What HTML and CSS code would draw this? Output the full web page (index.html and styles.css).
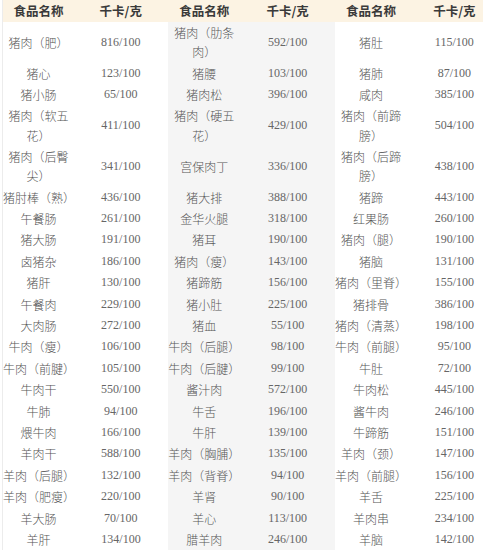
FILE: index.html
```html
<!DOCTYPE html>
<html lang="zh">
<head>
<meta charset="utf-8">
<title>食品热量表</title>
<link rel="stylesheet" href="styles.css">
</head>
<body>
<table class="cal">
  <colgroup>
    <col class="c-name1"><col class="c-kcal"><col class="c-name"><col class="c-kcal"><col class="c-name"><col class="c-kcal">
  </colgroup>
  <thead>
    <tr><th>食品名称</th><th>千卡/克</th><th class="alt">食品名称</th><th class="alt">千卡/克</th><th>食品名称</th><th>千卡/克</th></tr>
  </thead>
  <tbody>
    <tr class="dbl"><td>猪肉（肥）</td><td class="n">816/100</td><td class="alt">猪肉（肋条肉）</td><td class="alt n">592/100</td><td>猪肚</td><td class="n">115/100</td></tr>
    <tr><td>猪心</td><td class="n">123/100</td><td class="alt">猪腰</td><td class="alt n">103/100</td><td>猪肺</td><td class="n">87/100</td></tr>
    <tr><td>猪小肠</td><td class="n">65/100</td><td class="alt">猪肉松</td><td class="alt n">396/100</td><td>咸肉</td><td class="n">385/100</td></tr>
    <tr class="dbl"><td>猪肉（软五花）</td><td class="n">411/100</td><td class="alt">猪肉（硬五花）</td><td class="alt n">429/100</td><td>猪肉（前蹄膀）</td><td class="n">504/100</td></tr>
    <tr class="dbl"><td>猪肉（后臀尖）</td><td class="n">341/100</td><td class="alt">宫保肉丁</td><td class="alt n">336/100</td><td>猪肉（后蹄膀）</td><td class="n">438/100</td></tr>
    <tr><td>猪肘棒（熟）</td><td class="n">436/100</td><td class="alt">猪大排</td><td class="alt n">388/100</td><td>猪蹄</td><td class="n">443/100</td></tr>
    <tr><td>午餐肠</td><td class="n">261/100</td><td class="alt">金华火腿</td><td class="alt n">318/100</td><td>红果肠</td><td class="n">260/100</td></tr>
    <tr><td>猪大肠</td><td class="n">191/100</td><td class="alt">猪耳</td><td class="alt n">190/100</td><td>猪肉（腿）</td><td class="n">190/100</td></tr>
    <tr><td>卤猪杂</td><td class="n">186/100</td><td class="alt">猪肉（瘦）</td><td class="alt n">143/100</td><td>猪脑</td><td class="n">131/100</td></tr>
    <tr><td>猪肝</td><td class="n">130/100</td><td class="alt">猪蹄筋</td><td class="alt n">156/100</td><td>猪肉（里脊）</td><td class="n">155/100</td></tr>
    <tr><td>午餐肉</td><td class="n">229/100</td><td class="alt">猪小肚</td><td class="alt n">225/100</td><td>猪排骨</td><td class="n">386/100</td></tr>
    <tr><td>大肉肠</td><td class="n">272/100</td><td class="alt">猪血</td><td class="alt n">55/100</td><td>猪肉（清蒸）</td><td class="n">198/100</td></tr>
    <tr><td>牛肉（瘦）</td><td class="n">106/100</td><td class="alt">牛肉（后腿）</td><td class="alt n">98/100</td><td>牛肉（前腿）</td><td class="n">95/100</td></tr>
    <tr><td>牛肉（前腱）</td><td class="n">105/100</td><td class="alt">牛肉（后腱）</td><td class="alt n">99/100</td><td>牛肚</td><td class="n">72/100</td></tr>
    <tr><td>牛肉干</td><td class="n">550/100</td><td class="alt">酱汁肉</td><td class="alt n">572/100</td><td>牛肉松</td><td class="n">445/100</td></tr>
    <tr><td>牛肺</td><td class="n">94/100</td><td class="alt">牛舌</td><td class="alt n">196/100</td><td>酱牛肉</td><td class="n">246/100</td></tr>
    <tr><td>煨牛肉</td><td class="n">166/100</td><td class="alt">牛肝</td><td class="alt n">139/100</td><td>牛蹄筋</td><td class="n">151/100</td></tr>
    <tr><td>羊肉干</td><td class="n">588/100</td><td class="alt">羊肉（胸脯）</td><td class="alt n">135/100</td><td>羊肉（颈）</td><td class="n">147/100</td></tr>
    <tr><td>羊肉（后腿）</td><td class="n">132/100</td><td class="alt">羊肉（背脊）</td><td class="alt n">94/100</td><td>羊肉（前腿）</td><td class="n">156/100</td></tr>
    <tr><td>羊肉（肥瘦）</td><td class="n">220/100</td><td class="alt">羊肾</td><td class="alt n">90/100</td><td>羊舌</td><td class="n">225/100</td></tr>
    <tr><td>羊大肠</td><td class="n">70/100</td><td class="alt">羊心</td><td class="alt n">113/100</td><td>羊肉串</td><td class="n">234/100</td></tr>
    <tr><td>羊肝</td><td class="n">134/100</td><td class="alt">腊羊肉</td><td class="alt n">246/100</td><td>羊脑</td><td class="n">142/100</td></tr>
  </tbody>
</table>
</body>
</html>
```

FILE: styles.css
```css
html, body {
  margin: 0;
  padding: 0;
  background: #fff;
  overflow: hidden;
}

.cal {
  border-collapse: collapse;
  table-layout: fixed;
  width: 500px;
  margin-left: 2px;
  border-left: 1px solid #ececec;
  font-family: "Noto Sans CJK SC", "Noto Sans", sans-serif;
  font-size: 12px;
  color: #555;
}

.c-name1 { width: 71px; }
.c-name { width: 72px; }
.c-kcal { width: 94px; }

.cal th {
  height: 22px;
  padding: 0;
  background: #fcf3e3;
  color: #3a3a3a;
  font-size: 12.5px;
  font-weight: bold;
  text-align: center;
  vertical-align: middle;
  line-height: 22px;
}

.cal td {
  padding: 1.1px 0;
  height: 19.2px;
  line-height: 19.2px;
  text-align: center;
  vertical-align: middle;
  font-weight: 300;
}

.cal td.n {
  font-family: "Liberation Serif", serif;
  font-size: 12px;
  color: #666;
  font-weight: normal;
}

.cal .alt {
  background: #f5f5f5;
}

.cal thead .alt {
  background: #fcf3e3;
}
```
